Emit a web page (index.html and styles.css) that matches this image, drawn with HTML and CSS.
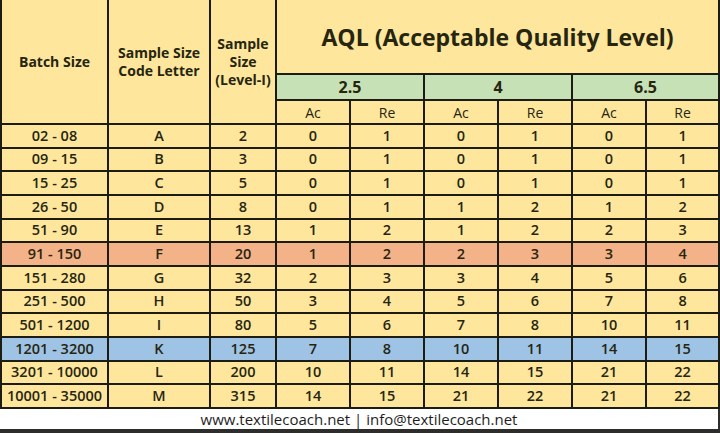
FILE: index.html
```html
<!DOCTYPE html>
<html>
<head>
<meta charset="utf-8">
<link rel="stylesheet" href="styles.css">
</head>
<body>
<div class="sheet">
<table class="aql">
<colgroup>
<col class="c-batch"><col class="c-code"><col class="c-size">
<col class="c-n"><col class="c-n"><col class="c-n"><col class="c-n"><col class="c-n"><col class="c-last">
</colgroup>
<thead>
<tr class="r-title">
<th rowspan="3" class="hd">Batch Size</th>
<th rowspan="3" class="hd">Sample Size<br>Code Letter</th>
<th rowspan="3" class="hd">Sample<br>Size<br>(Level-I)</th>
<th colspan="6" class="title">AQL (Acceptable Quality Level)</th>
</tr>
<tr class="r-level">
<th colspan="2" class="lvl">2.5</th>
<th colspan="2" class="lvl">4</th>
<th colspan="2" class="lvl">6.5</th>
</tr>
<tr class="r-acre">
<th class="ar">Ac</th><th class="ar">Re</th>
<th class="ar">Ac</th><th class="ar">Re</th>
<th class="ar">Ac</th><th class="ar">Re</th>
</tr>
</thead>
<tbody>
<tr><td>02 - 08</td><td>A</td><td>2</td><td>0</td><td>1</td><td>0</td><td>1</td><td>0</td><td>1</td></tr>
<tr><td>09 - 15</td><td>B</td><td>3</td><td>0</td><td>1</td><td>0</td><td>1</td><td>0</td><td>1</td></tr>
<tr><td>15 - 25</td><td>C</td><td>5</td><td>0</td><td>1</td><td>0</td><td>1</td><td>0</td><td>1</td></tr>
<tr><td>26 - 50</td><td>D</td><td>8</td><td>0</td><td>1</td><td>1</td><td>2</td><td>1</td><td>2</td></tr>
<tr><td>51 - 90</td><td>E</td><td>13</td><td>1</td><td>2</td><td>1</td><td>2</td><td>2</td><td>3</td></tr>
<tr class="hl-orange"><td>91 - 150</td><td>F</td><td>20</td><td>1</td><td>2</td><td>2</td><td>3</td><td>3</td><td>4</td></tr>
<tr><td>151 - 280</td><td>G</td><td>32</td><td>2</td><td>3</td><td>3</td><td>4</td><td>5</td><td>6</td></tr>
<tr><td>251 - 500</td><td>H</td><td>50</td><td>3</td><td>4</td><td>5</td><td>6</td><td>7</td><td>8</td></tr>
<tr><td>501 - 1200</td><td>I</td><td>80</td><td>5</td><td>6</td><td>7</td><td>8</td><td>10</td><td>11</td></tr>
<tr class="hl-blue"><td>1201 - 3200</td><td>K</td><td>125</td><td>7</td><td>8</td><td>10</td><td>11</td><td>14</td><td>15</td></tr>
<tr><td>3201 - 10000</td><td>L</td><td>200</td><td>10</td><td>11</td><td>14</td><td>15</td><td>21</td><td>22</td></tr>
<tr><td>10001 - 35000</td><td>M</td><td>315</td><td>14</td><td>15</td><td>21</td><td>22</td><td>21</td><td>22</td></tr>
</tbody>
</table>
<div class="footer">www.textilecoach.net | info@textilecoach.net</div>
</div>
</body>
</html>
```

FILE: styles.css
```css
html, body {
  margin: 0;
  padding: 0;
}
body {
  width: 720px;
  height: 433px;
  background: #2d2d2b;
  overflow: hidden;
  font-family: "Open Sans", "Liberation Sans", sans-serif;
  color: #262510;
}
.sheet {
  width: 718px;
  background: #fee79d;
}
.aql {
  width: 718px;
  border-collapse: collapse;
  table-layout: fixed;
  background: #fee79d;
}
.c-batch { width: 107px; }
.c-code { width: 102px; }
.c-size { width: 66px; }
.c-n { width: 74px; }
.c-last { width: 73px; }

.aql th, .aql td {
  border: 2px solid #1d1c12;
  padding: 0;
  text-align: center;
  vertical-align: middle;
}
.aql tr:first-child th { border-top: none; }

.hd {
  font-size: 14px;
  font-weight: 700;
  line-height: 18px;
}
.title {
  font-size: 23px;
  font-weight: 700;
  letter-spacing: 0;
}
.r-title { height: 74px; }
.r-level { height: 26px; }
.r-acre { height: 24px; }
.lvl {
  background: #c6e1b5;
  font-size: 16px;
  font-weight: 700;
}
.ar {
  font-size: 14px;
  font-weight: 500;
}
.aql td {
  height: 21.67px;
  font-size: 14.5px;
  font-weight: 600;
  line-height: 18px;
}
.hl-orange td { background: #f3b287; }
.hl-blue td { background: #9fc3e5; }

.footer {
  height: 20px;
  background: #ffffff;
  text-align: center;
  font-size: 15px;
  line-height: 20px;
  color: #1e1e1e;
}
```
